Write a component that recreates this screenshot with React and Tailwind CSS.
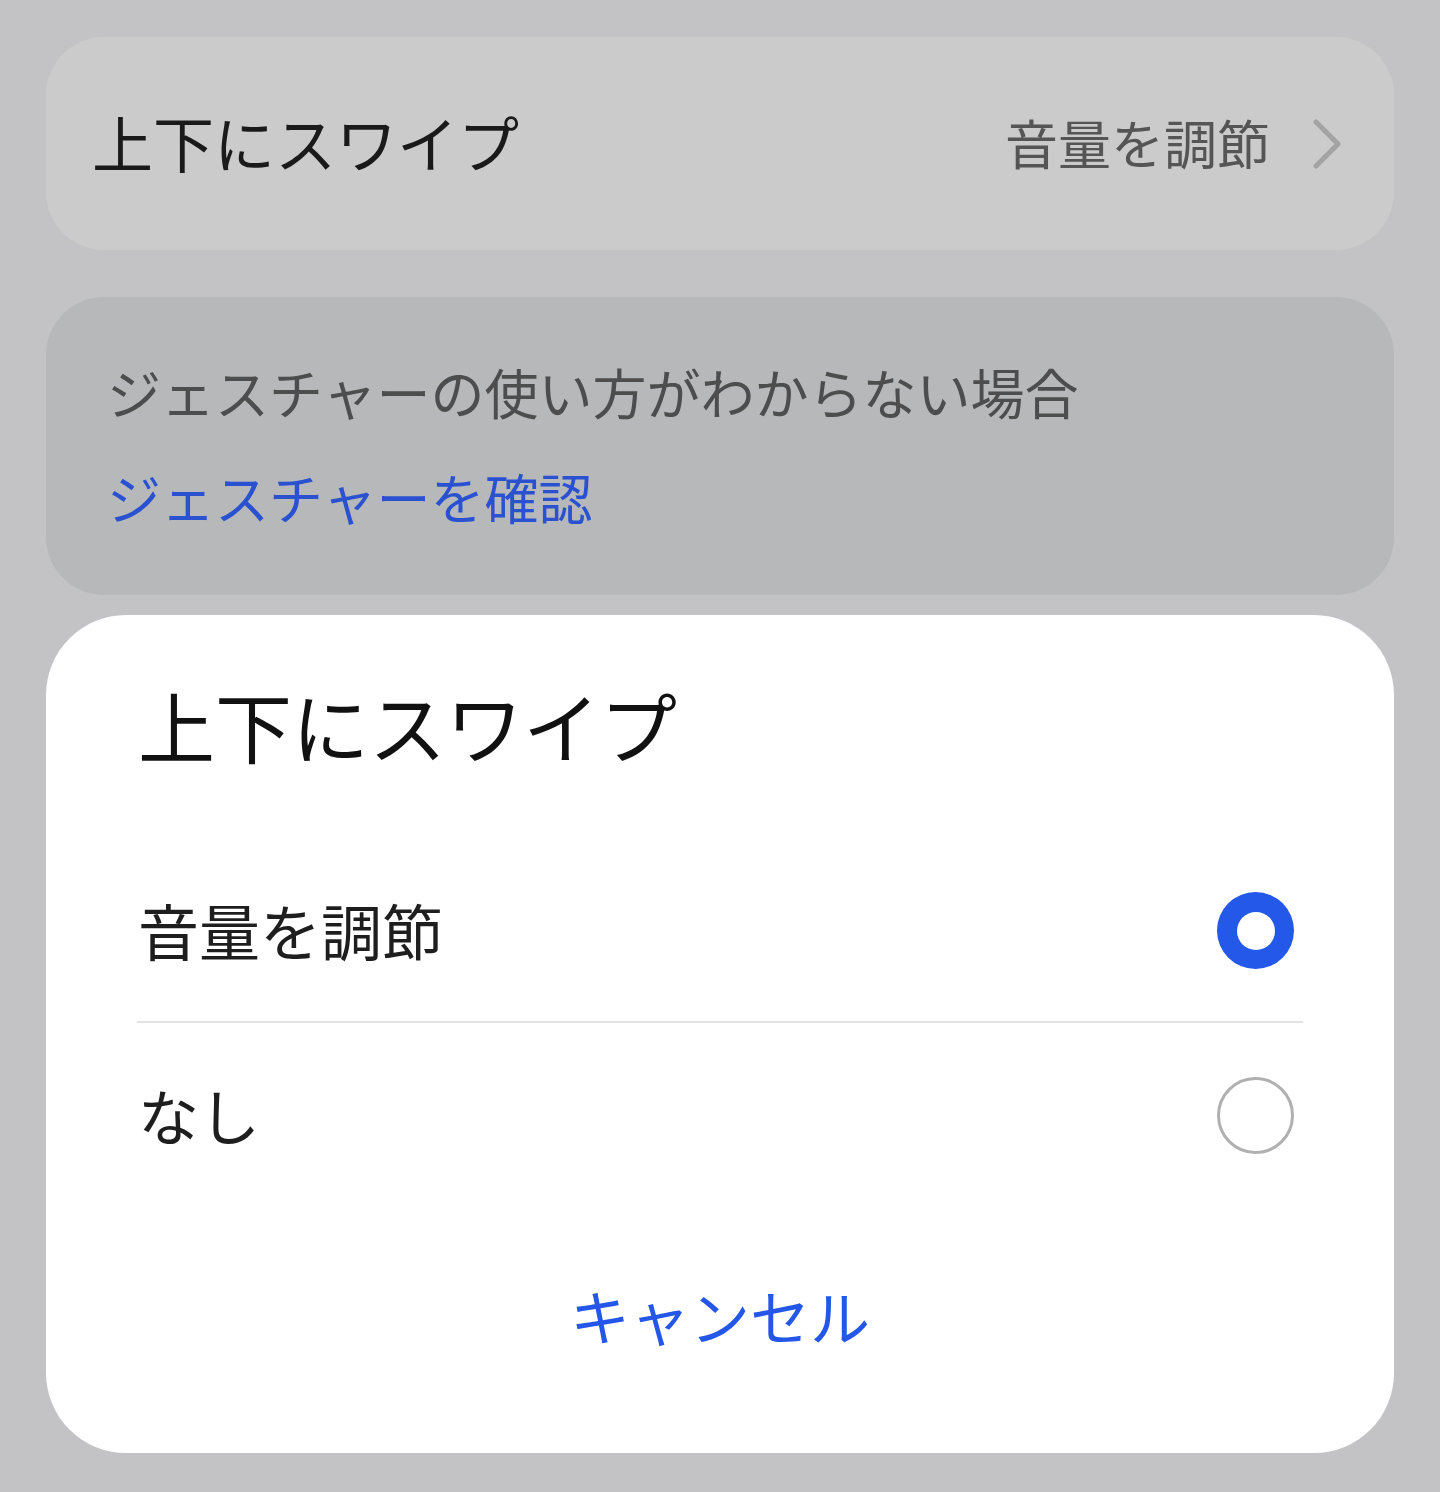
import React from "react";

const jp = { fontFamily: '"Noto Sans CJK JP", "Noto Sans", sans-serif' };

export default function App() {
  return (
    <div className="w-[1440px] h-[1492px] bg-[#c3c3c5] px-[46px] pt-[37px] flex flex-col" style={jp}>
      {/* Setting row */}
      <div className="h-[213px] rounded-[58px] bg-[#cbcbcb] flex items-center pl-[46px] pr-[53px] shrink-0">
        <div className="text-[61px] leading-none text-[#1a1a1a] flex-1 -mt-[4px]">上下にスワイプ</div>
        <div className="text-[53px] leading-none text-[#555555] -mt-[3px]">音量を調節</div>
        <svg className="ml-[43px] w-[28px] h-[50px]" viewBox="0 0 28 50" fill="none">
          <path d="M3 3 L25 25 L3 47" stroke="#a3a3a3" strokeWidth="5" strokeLinecap="round" strokeLinejoin="round" />
        </svg>
      </div>

      {/* Help card */}
      <div className="mt-[47px] h-[298px] rounded-[58px] bg-[#b7b8ba] pl-[61px] pt-[60px] shrink-0">
        <div className="text-[54px] leading-[70px] text-[#4d4d4d]">ジェスチャーの使い方がわからない場合</div>
        <div className="mt-[35px] text-[54px] leading-[70px] text-[#2a52d0]">ジェスチャーを確認</div>
      </div>

      {/* Modal */}
      <div className="mt-[20px] h-[838px] rounded-[80px] bg-white flex flex-col shrink-0">
        <div className="pl-[92px] pt-[70px] h-[225px]">
          <div className="text-[77px] leading-[80px] text-[#111111]">上下にスワイプ</div>
        </div>
        <div className="mx-[91px]">
          <div className="h-[183px] flex items-center justify-between pl-[1px] pr-[9px] border-b-2 border-[#e3e3e3]">
            <div className="text-[61px] leading-none text-[#1e1e1e] -mt-[3px]">音量を調節</div>
            <div className="w-[77px] h-[77px] rounded-full bg-[#2458e8] flex items-center justify-center">
              <div className="w-[38px] h-[38px] rounded-full bg-white" />
            </div>
          </div>
          <div className="h-[185px] flex items-center justify-between pl-[1px] pr-[9px]">
            <div className="text-[61px] leading-none text-[#1e1e1e] -mt-[3px]">なし</div>
            <div className="w-[77px] h-[77px] rounded-full border-[3px] border-[#b0b0b0]" />
          </div>
        </div>
        <div className="flex-1 flex items-center justify-center pb-[31px]">
          <div className="text-[60px] leading-none text-[#2456e8]">キャンセル</div>
        </div>
      </div>
    </div>
  );
}
